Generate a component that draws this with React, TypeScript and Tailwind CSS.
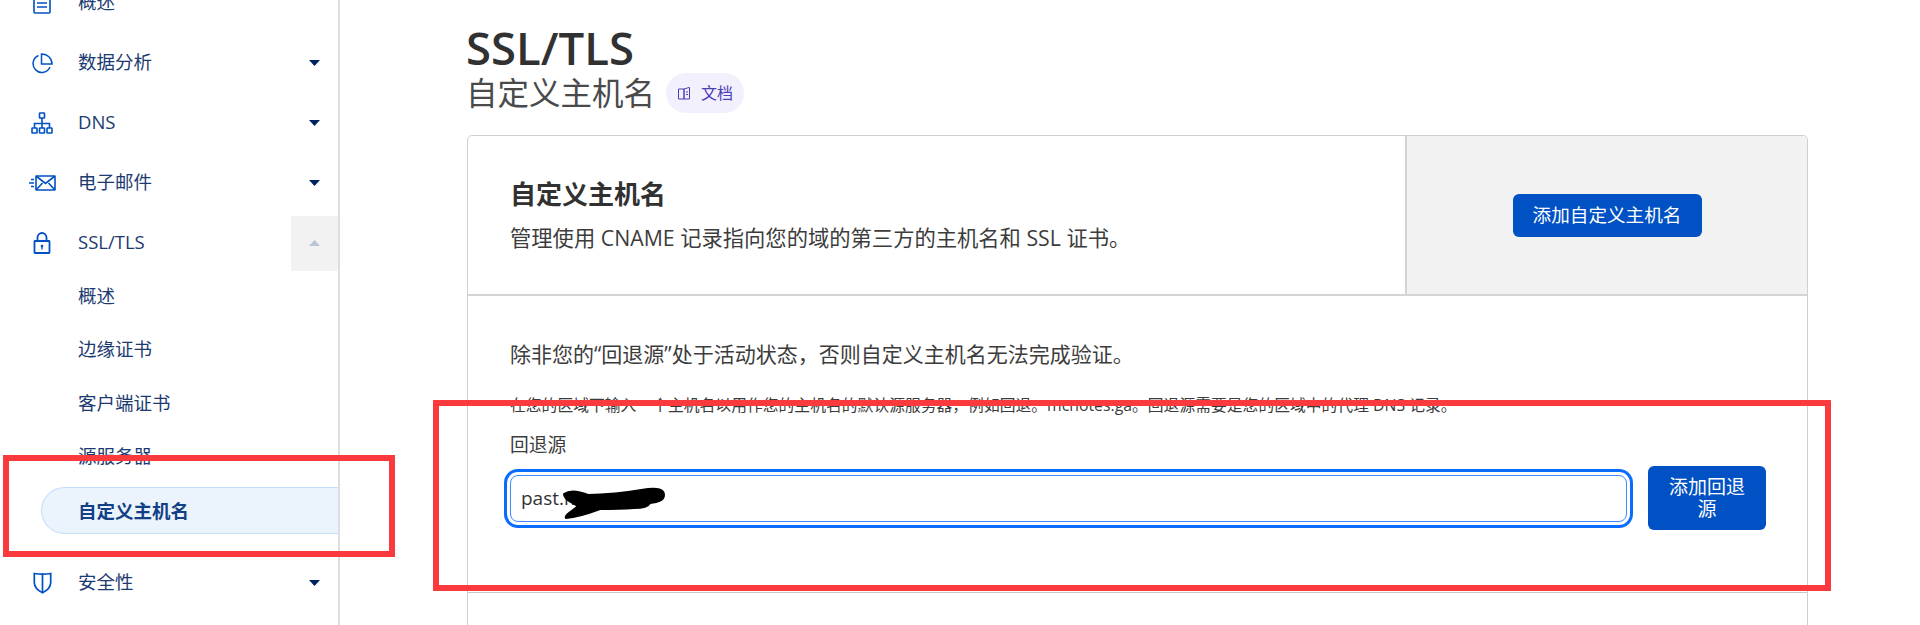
import React from "react";

const ic = "#0051c3";

function Doc() {
  return (
    <svg width="20" height="22" viewBox="0 0 20 22" fill="none" stroke={ic} strokeWidth="1.6">
      <rect x="2" y="1" width="16" height="20" rx="1" />
      <path d="M5 7h10M5 11h10M5 15h10" />
    </svg>
  );
}
function Pie() {
  return (
    <svg width="21" height="21" viewBox="0 0 21 21" fill="none" stroke={ic} strokeWidth="1.5">
      <path d="M6.500 2.500A8.800 8.800 0 1 0 18 14" />
      <path d="M9.500 1a10 10 0 0 1 10.500 10H9.500z" />
    </svg>
  );
}
function Net() {
  return (
    <svg width="22" height="22" viewBox="0 0 22 22" fill="none" stroke={ic} strokeWidth="1.6">
      <rect x="8.500" y="1" width="5" height="5" rx="0.500" />
      <rect x="1" y="16" width="5" height="5" rx="0.500" />
      <rect x="8.500" y="16" width="5" height="5" rx="0.500" />
      <rect x="16" y="16" width="5" height="5" rx="0.500" />
      <path d="M11 6v10M3.500 16v-4.500h15V16" />
    </svg>
  );
}
function Mail() {
  return (
    <svg width="27" height="16" viewBox="0 0 27 16" fill="none" stroke={ic} strokeWidth="1.600">
      <rect x="7" y="1" width="19" height="14" rx="0.500" />
      <path d="M7 1l9.500 7.500L26 1M7 15l6.500-7M26 15l-6.500-7" />
      <path d="M2 4.500h3M0 8h5M2 11.500h3" />
    </svg>
  );
}
function Lock() {
  return (
    <svg width="18" height="22" viewBox="0 0 18 22" fill="none" stroke={ic} strokeWidth="1.800">
      <rect x="1.500" y="9" width="15" height="12" rx="0.500" />
      <path d="M4.500 9V5.500a4.500 4.500 0 0 1 9 0V9" />
      <circle cx="9" cy="14" r="1.300" fill={ic} stroke="none" />
      <path d="M9 14v3.500" strokeWidth="1.300" />
    </svg>
  );
}
function Shield() {
  return (
    <svg width="19" height="22" viewBox="0 0 19 22" fill="none" stroke={ic} strokeWidth="1.700">
      <path d="M1.300 1.500c5 .8 11.400 .8 16.400 0v9c0 4.500-3.600 8-8.200 10.300-4.600-2.300-8.200-5.800-8.200-10.300z" />
      <path d="M9.500 1.500v19" />
    </svg>
  );
}
function Caret({ up }: { up?: boolean }) {
  return (
    <svg width="11" height="6" viewBox="0 0 11 6" fill={up ? "#b9c6d8" : "#00235f"}>
      <path d={up ? "M0 6L5.500 0 11 6z" : "M0 0h11L5.500 6z"} />
    </svg>
  );
}

function NavRow({ icon, label, expanded }: { icon?: React.ReactNode; label: string; expanded?: boolean }) {
  return (
    <div className="flex h-[60px] items-center">
      <div className="flex w-[84px] shrink-0 justify-center">{icon}</div>
      <span className="-ml-[6px] flex-1 pb-[2px] text-[18.500px] text-[#1b3a6f]">{label}</span>
      {label === "概述" ? null : expanded ? (
        <div className="flex h-[55px] w-[47px] items-center justify-center bg-[#f2f2f2]">
          <Caret up />
        </div>
      ) : (
        <div className="flex w-[47px] justify-center">
          <Caret />
        </div>
      )}
    </div>
  );
}

function SubRow({ label }: { label: string }) {
  return <div className="flex h-[53.500px] items-center pb-[2px] pl-[78px] text-[18.500px] text-[#1b3a6f]">{label}</div>;
}

export default function App() {
  return (
    <div
      className="relative flex h-[625px] w-[1920px] overflow-hidden bg-white"
      style={{ fontFamily: '"Open Sans", "Noto Sans CJK SC", sans-serif' }}
    >
      <aside className="-mt-[27px] w-[340px] shrink-0 border-r-2 border-[#dedede]">
        <NavRow icon={<Doc />} label="概述" />
        <NavRow icon={<Pie />} label="数据分析" />
        <NavRow icon={<Net />} label="DNS" />
        <NavRow icon={<Mail />} label="电子邮件" />
        <NavRow icon={<Lock />} label="SSL/TLS" expanded />
        <div className="-mt-[3px] pb-[15.500px]">
          <SubRow label="概述" />
          <SubRow label="边缘证书" />
          <SubRow label="客户端证书" />
          <SubRow label="源服务器" />
          <div className="ml-[41px] my-[3.250px] flex h-[47px] items-center rounded-l-[24px] border border-r-0 border-[#c5ddf9] bg-[#ebf3fd] pl-[36px] text-[18.500px] font-bold text-[#123f85]">
            自定义主机名
          </div>
        </div>
        <NavRow icon={<Shield />} label="安全性" />
      </aside>

      <main className="flex-1 pl-[127px] pr-[112px]">
        <h1 className="-ml-[1px] mt-[21px] text-[45.500px] leading-[52px] font-semibold text-[#313131]">SSL/TLS</h1>
        <div className="flex h-[40px] items-center">
          <h2 className="-ml-[1px] text-[31.500px] leading-[40px] font-normal text-[#4a4a4a]">自定义主机名</h2>
          <div className="ml-[11px] flex h-[40px] w-[78px] items-center justify-center gap-[10px] rounded-full bg-[#f2f0fd] text-[16px] text-[#4b3fb5]">
            <svg width="14" height="13" viewBox="0 0 14 13" fill="none" stroke="#4b3fb5" strokeWidth="1">
              <path d="M7 2H1.500v10H7M7 2l5-1.500h.5V12H7zM7 2v10" />
              <path d="M9 5h2M9 7.500h2" />
            </svg>
            <span>文档</span>
          </div>
        </div>

        <div className="mt-[22px] h-[600px] rounded-t-[5px] border border-[#cfcfcf]">
          <div className="flex h-[160px] border-b-2 border-[#d4d4d4]">
            <div className="flex-1 pl-[42px] pt-[40px]">
              <div className="text-[26px] leading-[36px] font-bold text-[#313131]">自定义主机名</div>
              <div className="mt-[11px] text-[21.300px] leading-[30px] text-[#3c3c3c]">
                管理使用 CNAME 记录指向您的域的第三方的主机名和 SSL 证书。
              </div>
            </div>
            <div className="flex w-[402px] items-center justify-center rounded-tr-[5px] border-l-2 border-[#d4d4d4] bg-[#f2f2f2]">
              <button className="h-[43px] w-[189px] rounded-[6px] bg-[#0051c3] text-[18.600px] text-white">
                添加自定义主机名
              </button>
            </div>
          </div>
          <div className="h-[297px] border-b border-[#c8c8c8] pl-[42px] pr-[41px] pt-[43px]">
            <div className="text-[21px] leading-[30px] text-[#3c3c3c]">
              除非您的“回退源”处于活动状态，否则自定义主机名无法完成验证。
            </div>
            <div className="mt-[24px] text-[15.800px] leading-[24px] text-[#3c3c3c]">
              在您的区域下输入一个主机名以用作您的主机名的默认源服务器，例如回退。mcnotes.ga。回退源需要是您的区域中的代理 DNS 记录。
            </div>
            <div className="mt-[15px] text-[18.800px] leading-[26px] text-[#3c3c3c]">回退源</div>
            <div className="mt-[8px] flex items-center">
              <input
                readOnly
                value="past.m"
                className="mr-[21px] h-[47px] min-w-0 flex-1 rounded-[8px] border border-[#3d8bff] bg-white pl-[10px] text-[19px] text-[#333] outline-none ring-[3px] ring-[#0a6cff] ring-offset-[3px]"
              />
              <button className="h-[64px] w-[118px] rounded-[6px] bg-[#0051c3] px-[16px] text-[19px] leading-[22px] text-white">
                添加回退源
              </button>
            </div>
          </div>
        </div>
      </main>

      {/* hand-drawn scribble over the hostname */}
      <svg className="pointer-events-none absolute left-[560px] top-[486px]" width="108" height="34" viewBox="0 0 108 34" fill="none">
        <path
          d="M4 8c6-4 14-3 24 1 20 0 42-3 60-6 9-1 16 0 16 6 0 6-7 7-14 8-2 4-8 5-16 5-14 1-24 1-34 1-8 3-22 8-34 9-2-3 8-8 12-12-6-3-14-7-14-12z"
          fill="#000"
          stroke="#000"
          strokeWidth="2"
          strokeLinejoin="round"
        />
      </svg>

      {/* red annotation frames */}
      <div className="pointer-events-none absolute left-[3px] top-[455px] h-[102px] w-[392px] border-[6px] border-[#fb3a3d]" />
      <div className="pointer-events-none absolute left-[433px] top-[400px] h-[191px] w-[1398px] border-[6px] border-[#fb3a3d]" />
    </div>
  );
}
